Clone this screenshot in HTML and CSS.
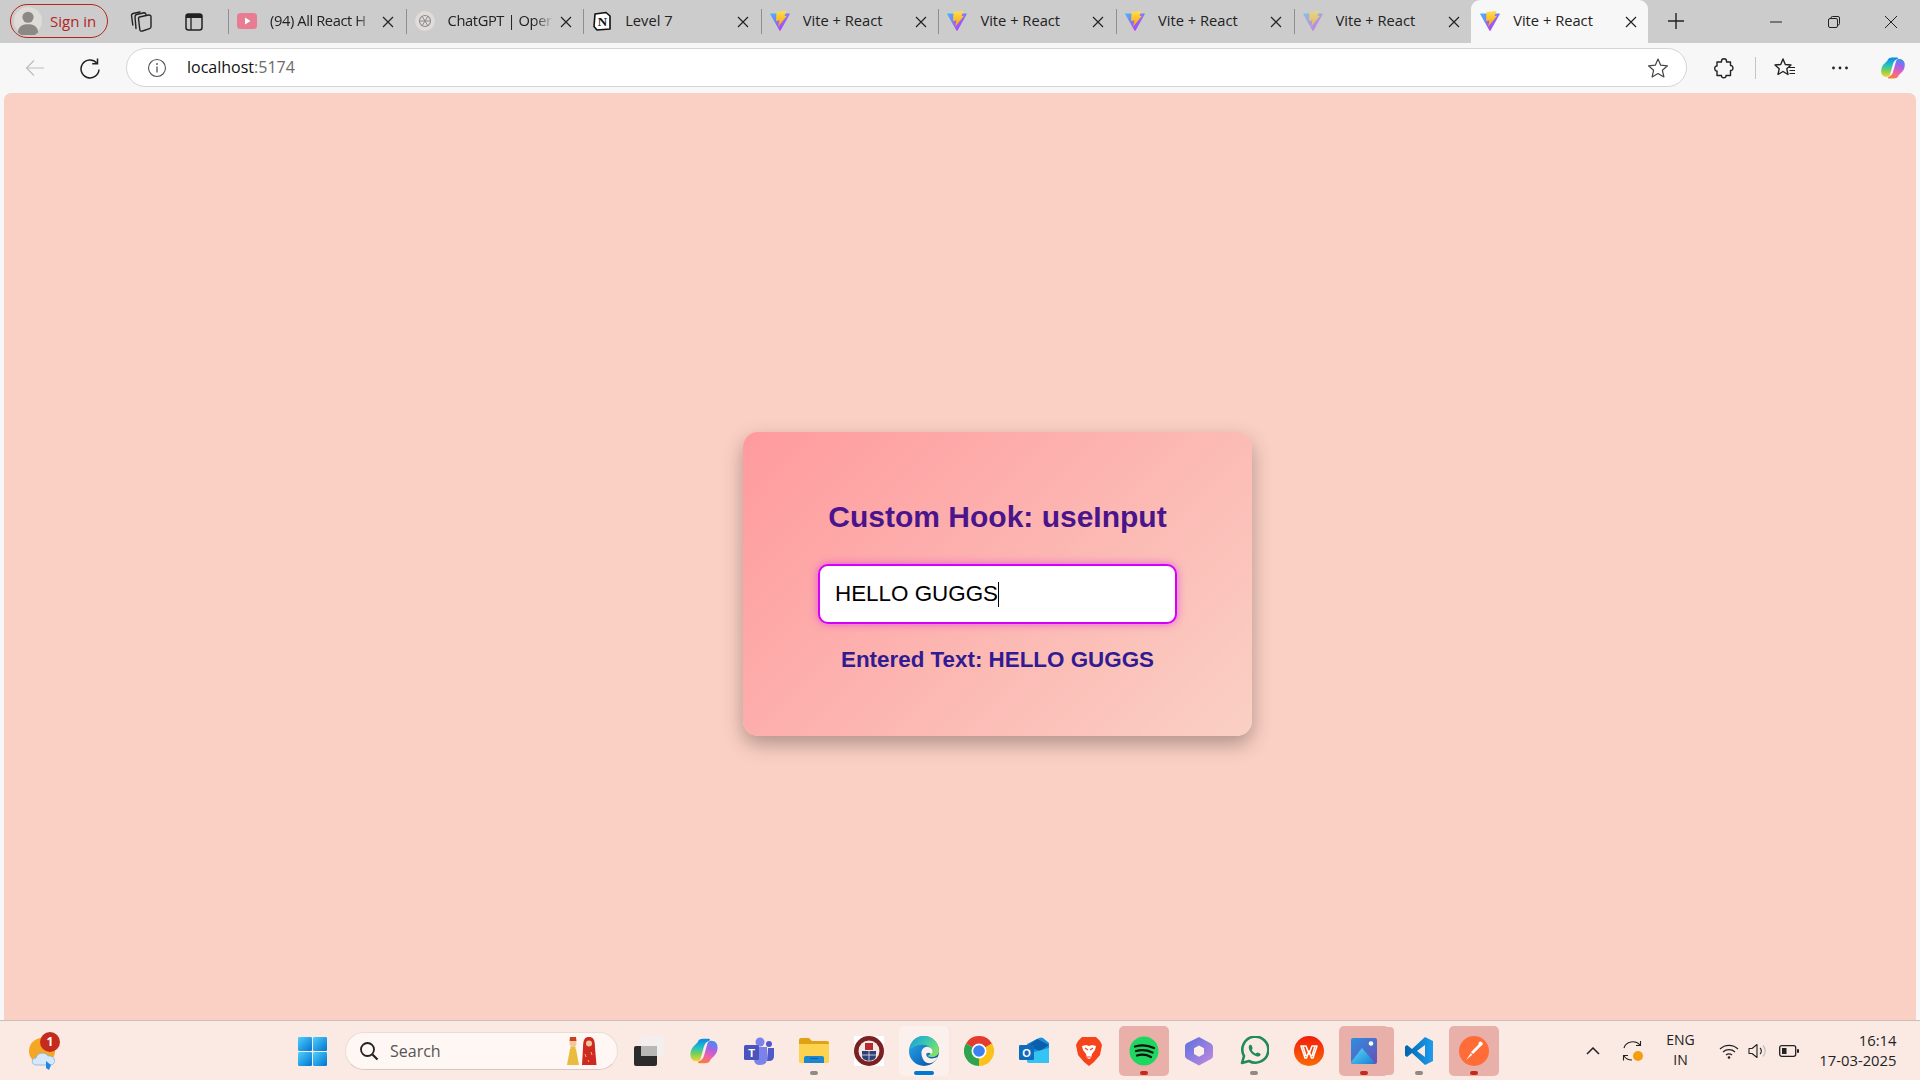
FILE: index.html
```html
<!DOCTYPE html>
<html lang="en">
<head>
<meta charset="utf-8">
<title>Vite + React</title>
<link rel="stylesheet" href="styles.css">
</head>
<body>
<svg class="defs" aria-hidden="true">
  <defs>
    <linearGradient id="viteBlue" x1="0" y1="0" x2=".75" y2="1"><stop offset="0" stop-color="#41b8ff"/><stop offset=".55" stop-color="#8a6cf5"/><stop offset="1" stop-color="#c034fe"/></linearGradient>
    <linearGradient id="viteBolt" x1="0" y1="0" x2="0" y2="1"><stop offset="0" stop-color="#ffdf50"/><stop offset="1" stop-color="#ff9f00"/></linearGradient>
    <linearGradient id="copi" x1=".3" y1="0" x2=".3" y2="1"><stop offset="0" stop-color="#0b86e8"/><stop offset=".4" stop-color="#22c3c4"/><stop offset=".68" stop-color="#7ed04d"/><stop offset="1" stop-color="#f6d33c"/></linearGradient>
    <linearGradient id="copi2" x1=".7" y1="0" x2=".4" y2="1"><stop offset="0" stop-color="#3f8ff0"/><stop offset=".35" stop-color="#a861e8"/><stop offset=".7" stop-color="#f060a8"/><stop offset="1" stop-color="#f5803c"/></linearGradient>
    <linearGradient id="startG" x1="0" y1="0" x2="1" y2="1"><stop offset="0" stop-color="#4fd0fb"/><stop offset="1" stop-color="#0073d1"/></linearGradient>
    <linearGradient id="edgeG" x1="0" y1="0" x2="1" y2="1"><stop offset="0" stop-color="#2bb0ea"/><stop offset=".6" stop-color="#1272c4"/><stop offset="1" stop-color="#0b4a94"/></linearGradient>
    <linearGradient id="edgeT" x1="0" y1="0" x2="1" y2=".6"><stop offset="0" stop-color="#1f9bdc"/><stop offset=".5" stop-color="#36c6b0"/><stop offset="1" stop-color="#7ee068"/></linearGradient>
    <linearGradient id="photoG" x1="0" y1="0" x2="1" y2="1"><stop offset="0" stop-color="#2d8fe0"/><stop offset="1" stop-color="#6a4fb5"/></linearGradient>
    <linearGradient id="photoM" x1="0" y1="0" x2="1" y2="1"><stop offset="0" stop-color="#5adcf5"/><stop offset="1" stop-color="#1a7fd6"/></linearGradient>
    <linearGradient id="m365" x1="0" y1="0" x2="1" y2="1"><stop offset="0" stop-color="#5a6fe0"/><stop offset="1" stop-color="#c58be0"/></linearGradient>
    <linearGradient id="wps" x1="0" y1="0" x2="0" y2="1"><stop offset="0" stop-color="#f21d0c"/><stop offset="1" stop-color="#fb6a05"/></linearGradient>
    <linearGradient id="vsc" x1="0" y1="0" x2="1" y2="0"><stop offset="0" stop-color="#0065a9"/><stop offset="1" stop-color="#1f9cf0"/></linearGradient>

    <symbol id="vite" viewBox="0 0 20 20">
      <path d="M.6 2.500 H19.400 Q20 2.500 19.700 3.200 L10.600 19.500 Q10 20.300 9.400 19.500 L.3 3.200 Q0 2.500 .6 2.500 Z" fill="url(#viteBlue)"/>
      <path d="M6.500 1 L16.500 0 L14.500 5 L17 4.800 L8 16 L9.500 9.500 L6 10 Z" fill="url(#viteBolt)"/>
    </symbol>
    <symbol id="close" viewBox="0 0 12 12">
      <path d="M1 1 L11 11 M11 1 L1 11" fill="none" stroke="#222" stroke-width="1.200"/>
    </symbol>
    <symbol id="copilot" viewBox="0 0 32 32">
      <path d="M9 7 C10 4 12 3 15 3 H21 C22.500 3 23 4.200 21.500 5 C18.500 6 17 8 16 11 L12.500 23.500 C11.500 27 10 27 8 27 C4 27 1.500 24 1.500 20 C1.500 16 3 13 5 11 Z" fill="url(#copi)"/>
      <path d="M23 25 C22 28 20 29 17 29 H11 C9.500 29 9 27.800 10.500 27 C13.500 26 15 24 16 21 L19.500 8.500 C20.500 5 22 5 24 5 C28 5 30.500 8 30.500 12 C30.500 16 29 19 27 21 Z" fill="url(#copi2)"/>
    </symbol>
  </defs>
</svg>

<header class="tabstrip">
  <div class="profile">
    <span class="pill">
      <svg class="avatar" viewBox="0 0 30 30"><circle cx="15" cy="15" r="15" fill="#dfdcd7"/><circle cx="15" cy="11" r="6" fill="#8b8985"/><path d="M4 27 C5 20 10 18.500 15 18.500 C20 18.500 25 20 26 27 A15 15 0 0 1 4 27 Z" fill="#8b8985"/></svg>
      <span class="pill-text">Sign in</span>
    </span>
    <span class="strip-btn">
      <svg viewBox="0 0 22 21" class="stack"><path d="M9.500 6 L18.500 4 Q21 3.800 21 6 V15.500 Q21 17.200 19.500 17.700 L12.500 20 Q10 20.500 9.800 18.500 L8.500 7.500 Q8.500 6.300 9.500 6 Z" fill="none" stroke="#222" stroke-width="1.400" stroke-linejoin="round"/><path d="M6 17.500 L5 6 Q5 4 6.500 3.500 L14 1.800 Q15.500 1.700 16 3.500" fill="none" stroke="#222" stroke-width="1.400" stroke-linecap="round"/><path d="M2.800 14 L1.500 4.500 Q1.400 3 3 2.500 L10 1" fill="none" stroke="#222" stroke-width="1.400" stroke-linecap="round"/></svg>
    </span>
    <span class="strip-btn">
      <svg viewBox="0 0 20 20" class="i20"><rect x="2" y="2" width="16" height="16" rx="2.500" fill="none" stroke="#222" stroke-width="1.500"/><path d="M2 3.500 Q2 2 4 2 H16 Q18 2 18 3.500 V6 H2 Z" fill="#222"/><path d="M7 6 V18" stroke="#222" stroke-width="1.300"/></svg>
    </span>
  </div>

  <div class="tab">
    <svg class="fav" viewBox="0 0 20 20"><rect x="0" y="2" width="20" height="16" rx="3.500" fill="#e87c92"/><path d="M8 6.500 L13.500 10 L8 13.500 Z" fill="#fff"/></svg>
    <span class="title fade">(94) All React H</span>
    <svg class="x"><use href="#close"/></svg>
  </div>
  <div class="tab">
    <svg class="fav" viewBox="0 0 20 20"><circle cx="10" cy="10" r="10" fill="#dfdcd9"/><circle cx="10" cy="10" r="5.500" fill="none" stroke="#8e8c8a" stroke-width="1.100"/><path d="M7 5 L13 15 M13 5 L7 15 M4.500 10 H15.500" stroke="#8e8c8a" stroke-width="1"/></svg>
    <span class="title fade">ChatGPT | Oper</span>
    <svg class="x"><use href="#close"/></svg>
  </div>
  <div class="tab">
    <svg class="fav" viewBox="0 0 20 20"><path d="M3 3 L14 1.500 L18 5 V18 L5 19 L2 15.500 Z" fill="#fff" stroke="#111" stroke-width="1.600" stroke-linejoin="round"/><text x="10.500" y="15" class="notion">N</text></svg>
    <span class="title">Level 7</span>
    <svg class="x"><use href="#close"/></svg>
  </div>
  <div class="tab">
    <svg class="fav"><use href="#vite"/></svg>
    <span class="title">Vite + React</span>
    <svg class="x"><use href="#close"/></svg>
  </div>
  <div class="tab">
    <svg class="fav"><use href="#vite"/></svg>
    <span class="title">Vite + React</span>
    <svg class="x"><use href="#close"/></svg>
  </div>
  <div class="tab">
    <svg class="fav"><use href="#vite"/></svg>
    <span class="title">Vite + React</span>
    <svg class="x"><use href="#close"/></svg>
  </div>
  <div class="tab">
    <svg class="fav faded"><use href="#vite"/></svg>
    <span class="title">Vite + React</span>
    <svg class="x"><use href="#close"/></svg>
  </div>
  <div class="tab tab-active">
    <svg class="fav"><use href="#vite"/></svg>
    <span class="title">Vite + React</span>
    <svg class="x"><use href="#close"/></svg>
  </div>
  <span class="newtab">
    <svg viewBox="0 0 18 18" class="i18"><path d="M9 1 V17 M1 9 H17" stroke="#222" stroke-width="1.400"/></svg>
  </span>
  <div class="winctl">
    <span class="win-btn"><svg viewBox="0 0 12 12" class="i12"><path d="M0 6 H12" stroke="#222" stroke-width="1"/></svg></span>
    <span class="win-btn"><svg viewBox="0 0 12 12" class="i12"><rect x=".5" y="2.500" width="9" height="9" rx="1.500" fill="none" stroke="#222"/><path d="M3 2.500 V2 Q3 .5 4.500 .5 H10 Q11.500 .5 11.500 2 V7.500 Q11.500 9 10 9" fill="none" stroke="#222"/></svg></span>
    <span class="win-btn"><svg viewBox="0 0 12 12" class="i12"><path d="M0 0 L12 12 M12 0 L0 12" stroke="#222" stroke-width="1"/></svg></span>
  </div>
</header>

<nav class="toolbar">
  <span class="tool">
    <svg viewBox="0 0 20 20" class="i20"><path d="M19 10 H1.500 M9 2.500 L1.500 10 L9 17.500" fill="none" stroke="#bdbdbd" stroke-width="1.200"/></svg>
  </span>
  <span class="tool tool-reload">
    <svg viewBox="0 0 22 22" class="i22"><path d="M17.800 6 A9 9 0 1 0 20 12.500" fill="none" stroke="#222" stroke-width="1.500"/><path d="M18.500 1.500 V6.800 H13.200" fill="none" stroke="#222" stroke-width="1.500"/></svg>
  </span>
  <div class="addr">
    <svg viewBox="0 0 20 20" class="i20 info"><circle cx="10" cy="10" r="8.500" fill="none" stroke="#555" stroke-width="1.100"/><path d="M10 8.500 V14.500" stroke="#555" stroke-width="1.300"/><circle cx="10" cy="6" r=".9" fill="#555"/></svg>
    <span class="url">localhost<span class="port">:5174</span></span>
    <svg viewBox="0 0 22 22" class="i22 star"><path d="M11 2 L13.700 8.200 L20.500 8.800 L15.400 13.300 L16.900 20 L11 16.500 L5.100 20 L6.600 13.300 L1.500 8.800 L8.300 8.200 Z" fill="none" stroke="#444" stroke-width="1.200" stroke-linejoin="round"/></svg>
  </div>
  <span class="tool tool-ext">
    <svg viewBox="0 0 22 22" class="i22"><path d="M8.500 4 C8.500 1 13.500 1 13.500 4 L13.500 5 L17.500 5 L17.500 8.500 C20.500 8 21 14 17.500 13.500 L17.500 18.500 L13 18.500 C13.500 21.500 8 21.500 8.500 18.500 L4 18.500 L4 14 C1 14.500 1 8.500 4 9 L4 5 L8.500 5 Z" fill="none" stroke="#222" stroke-width="1.400" stroke-linejoin="round"/></svg>
  </span>
  <span class="tool-sep"></span>
  <span class="tool tool-fav">
    <svg viewBox="0 0 24 22" class="i22w"><path d="M10 2 L12.300 7.500 L18 8 L13.800 11.800 L15 17.500 L10 14.500 L5 17.500 L6.200 11.800 L2 8 L7.700 7.500 Z" fill="none" stroke="#222" stroke-width="1.400" stroke-linejoin="round"/><path d="M16 10.500 H22 M16.500 13.500 H22 M16.500 16.500 H22" stroke="#222" stroke-width="1.200"/></svg>
  </span>
  <span class="tool tool-dots">
    <svg viewBox="0 0 18 4" class="dots"><circle cx="2.500" cy="2" r="1.400" fill="#222"/><circle cx="9" cy="2" r="1.400" fill="#222"/><circle cx="15.500" cy="2" r="1.400" fill="#222"/></svg>
  </span>
  <span class="tool tool-copilot">
    <svg class="i26"><use href="#copilot"/></svg>
  </span>
</nav>

<main class="page">
  <section class="card">
    <h2 class="card-title">Custom Hook: useInput</h2>
    <div class="field"><span class="field-text">HELLO GUGGS</span><span class="caret"></span></div>
    <p class="entered">Entered Text: HELLO GUGGS</p>
  </section>
</main>

<footer class="taskbar">
  <span class="weather">
    <svg viewBox="0 0 28 38" class="weather-svg"><circle cx="14" cy="19" r="13" fill="#f5a623"/><path d="M8 33 C3 33 3 26 8 26 C9 20 18 20 20 24 C27 23 29 32 23 33 Z" fill="#d7e8fa" stroke="#7fb4ea" stroke-width=".8"/><path d="M18 29 L23 33 L21 38 L18 36 Z" fill="#1e88e5"/></svg>
    <span class="badge">1</span>
  </span>
  <span class="start">
    <svg viewBox="0 0 29 29" class="start-svg"><rect x="0" y="0" width="14" height="14" rx="1.200" fill="url(#startG)"/><rect x="15" y="0" width="14" height="14" rx="1.200" fill="url(#startG)"/><rect x="0" y="15" width="14" height="14" rx="1.200" fill="url(#startG)"/><rect x="15" y="15" width="14" height="14" rx="1.200" fill="url(#startG)"/></svg>
  </span>
  <div class="search">
    <svg viewBox="0 0 20 20" class="i20"><circle cx="8.500" cy="8.500" r="6.500" fill="none" stroke="#222" stroke-width="1.800"/><path d="M13.500 13.500 L18.500 18.500" stroke="#222" stroke-width="2.200"/></svg>
    <span class="search-text">Search</span>
    <svg viewBox="0 0 32 30" class="dolls"><path d="M5 13 H11 L14 29 H2 Z" fill="#e9bb3f"/><circle cx="8" cy="7" r="3.500" fill="#f2c79e"/><path d="M4.500 5 H11.500 L11 1 H5 Z" fill="#c8401e"/><path d="M5.500 10.500 H10.500 V14 H5.500 Z" fill="#e9bb3f"/><path d="M18 12 C18 3 20 1 24 1 C28 1 30 3 30 12 L31.500 29 H17 Z" fill="#cf2a22"/><circle cx="24" cy="7.500" r="3" fill="#f2c79e"/><path d="M20 18 L21 21 M26 16 L27 19 M23 24 L24 26" stroke="#f2b84b" stroke-width="1"/></svg>
  </div>

  <div class="apps">
    <span class="app">
      <svg viewBox="0 0 30 30" class="icon"><rect x="0" y="10" width="23" height="20" rx="2" fill="#2b2b2b"/><rect x="7" y="0" width="23" height="20" rx="2" fill="#f2f0ef" fill-opacity=".9"/><rect x="7" y="10" width="16" height="10" fill="#b9b7b6"/></svg>
    </span>
    <span class="app">
      <svg class="icon"><use href="#copilot"/></svg>
    </span>
    <span class="app">
      <svg viewBox="0 0 30 30" class="icon"><circle cx="25" cy="8" r="3" fill="#5059c9"/><circle cx="16" cy="6" r="4.500" fill="#7b83eb"/><path d="M10 11 H23 V23 Q23 29 16 29 Q10 29 10 23 Z" fill="#7b83eb"/><path d="M24 12 H30 V20 Q30 25 25 25 L23 25 Z" fill="#5059c9"/><rect x="0" y="9" width="15" height="15" rx="1.500" fill="#4b53bc"/><text x="7.500" y="21" class="logo-letter">T</text></svg>
    </span>
    <span class="app has-dot">
      <svg viewBox="0 0 30 30" class="icon"><path d="M0 4 Q0 2 2 2 H10 L13 5 H28 Q30 5 30 7 V10 H0 Z" fill="#e0a214"/><path d="M0 8 H30 V26 Q30 27 29 27 H1 Q0 27 0 26 Z" fill="#fbd34e"/><path d="M5 27 V22 Q5 20 7 20 H23 Q25 20 25 22 V27 Z" fill="#1b87cf"/><path d="M11 22.500 H19" stroke="#0c5ea0" stroke-width="1"/></svg>
    </span>
    <span class="app">
      <svg viewBox="0 0 30 30" class="icon"><rect width="30" height="30" fill="#fff"/><circle cx="15" cy="15" r="15" fill="#7a1f22"/><circle cx="15" cy="15" r="10.500" fill="#f3e9e3"/><path d="M11 7 H19 V14 H11 Z" fill="#b8292f"/><path d="M8 15 H22 V20 Q22 24 15 25 Q8 24 8 20 Z" fill="#2b3f7a"/><path d="M15 15 V25 M8 19 H22" stroke="#f3e9e3" stroke-width=".8"/></svg>
    </span>
    <span class="app app-edge">
      <svg viewBox="0 0 30 30" class="icon"><circle cx="15" cy="15" r="15" fill="url(#edgeG)"/><path d="M1.500 9 C4 3 9 0 15 0 C24 0 30 7 30 15 C30 19 26 21.500 22 21 C20 21 18.500 20 18.500 20 C23 18 23 12 19 10 C13 7 5 10 1.500 13 Z" fill="url(#edgeT)"/><path d="M12.500 18 C12 13 16 9.800 20 11.200 C23.500 12.500 24.500 15.500 22.500 18 C20 15.800 16.800 16.500 17.300 19 C18 22.500 24 24 29 20.500 C27.500 24.500 24 27 20.500 27.300 C16 27.500 13 23 12.500 18 Z" fill="#fcf0ec"/></svg>
    </span>
    <span class="app">
      <svg viewBox="0 0 30 30" class="icon"><path d="M15 15 L2 7.500 A15 15 0 0 1 28 7.500 Z" fill="#e33b2e"/><path d="M15 15 L28 7.500 A15 15 0 0 1 15 30 Z" fill="#fbc116"/><path d="M15 15 L15 30 A15 15 0 0 1 2 7.500 Z" fill="#2ea44f"/><circle cx="15" cy="15" r="7.500" fill="#fff"/><circle cx="15" cy="15" r="5.800" fill="#3b82f0"/></svg>
    </span>
    <span class="app">
      <svg viewBox="0 0 30 30" class="icon"><path d="M8 8 L20 2 Q22 1 24 2 L30 7 V26 Q30 27 28 27 H12 Q8 27 8 24 Z" fill="#1490df"/><path d="M18 3 L30 9 L21 15 L8 10 Z" fill="#0b5fa8"/><path d="M8 18 L30 12 V26 Q30 27 28 27 H10 Q8 27 8 25 Z" fill="#34c4f3"/><rect x="0" y="9" width="15" height="15" rx="1.200" fill="#0f6cbd"/><text x="7.500" y="21" class="logo-letter">O</text></svg>
    </span>
    <span class="app">
      <svg viewBox="0 0 30 30" class="icon"><path d="M8 1 H22 L26 5 L28 9 L26 19 L20 26 L15 30 L10 26 L4 19 L2 9 L4 5 Z" fill="#f5431c"/><path d="M8 10 L12 9 L15 10 L18 9 L22 10 L21 14 L18 18 L17 22 L15 23 L13 22 L12 18 L9 14 Z" fill="#fff"/><path d="M11 12 L14 14 M19 12 L16 14 M13 21 H17" stroke="#f5431c" stroke-width="1.200"/></svg>
    </span>
    <span class="app app-run">
      <svg viewBox="0 0 30 30" class="icon"><circle cx="15" cy="15" r="14.500" fill="#1ed760"/><path d="M6 10.500 C13 8.500 19 9 25 12 M7 15 C13 13.500 18 14 23.500 16.500 M8 19.500 C13 18 17.500 18.500 22 21" fill="none" stroke="#111" stroke-width="2.300" stroke-linecap="round"/></svg>
    </span>
    <span class="app">
      <svg viewBox="0 0 30 30" class="icon"><path d="M15 1 L27 7.500 Q29 9 29 11 V20 Q29 22 27 23 L15 29.500 L3 23 Q1 22 1 20 V10 Q1 8 3 7 Z" fill="url(#m365)"/><path d="M15 9.500 L20 12.300 V18 L15 20.800 L10 18 V12.300 Z" fill="#fcefea"/></svg>
    </span>
    <span class="app has-dot">
      <svg viewBox="0 0 30 30" class="icon"><path d="M3 27 L5 20 A13 13 0 1 1 10 25 Z" fill="none" stroke="#1f8a5b" stroke-width="2.600" stroke-linejoin="round"/><path d="M10.500 9 Q9 11 10.500 14.500 Q13 19 18 20.500 Q20.500 21 21.500 19 Q22 18 21 17.500 L18.800 16.500 Q18 16.300 17.500 17 Q17 17.800 16 17.300 Q13.500 16 12.700 13.800 Q13.500 13 13.700 12.300 L12.700 9.500 Q12 8.300 10.500 9 Z" fill="#1f8a5b"/></svg>
    </span>
    <span class="app">
      <svg viewBox="0 0 30 30" class="icon"><circle cx="15" cy="15" r="15" fill="url(#wps)"/><path d="M7 10 H12 L15 18 L18 10 H23 L19 22 H17.500 L15 15 L12.500 22 H11 Z M9 10 L12 20 M21 10 L18 20" fill="none" stroke="#fff" stroke-width="1.500" stroke-linejoin="round"/></svg>
    </span>
    <span class="app app-run app-stacked">
      <svg viewBox="0 0 26 26" class="icon icon-photo"><rect width="26" height="26" rx="2" fill="url(#photoG)"/><circle cx="20" cy="5.500" r="2.300" fill="#fff"/><path d="M0 24 L11 10 L23 24 Q23 26 21 26 H2 Q0 26 0 24 Z" fill="url(#photoM)"/></svg>
    </span>
    <span class="app has-dot">
      <svg viewBox="0 0 30 30" class="icon"><path d="M21 1 L29 5 V25 L21 29 L8 17 L3 21 L1 19.500 V10.500 L3 9 L8 13 Z M21 9 L13 15 L21 21 Z" fill="url(#vsc)" fill-rule="evenodd"/></svg>
    </span>
    <span class="app app-run">
      <svg viewBox="0 0 30 30" class="icon"><circle cx="15" cy="15" r="15" fill="#ff6c37"/><path d="M22 6 L24 8 L14 18 L12 16 Z M12 17 L13 19 L7 24 Z" fill="#fff"/><circle cx="21.500" cy="7.500" r="2" fill="#fff"/></svg>
    </span>
  </div>

  <div class="tray">
    <svg viewBox="0 0 14 8" class="chev"><path d="M1 7 L7 1 L13 7" fill="none" stroke="#222" stroke-width="1.500"/></svg>
    <span class="sync">
      <svg viewBox="0 0 22 22" class="i22"><path d="M2 8 A9 8 0 0 1 18 5" fill="none" stroke="#222" stroke-width="1.100"/><path d="M18.500 1 V5.500 H14" fill="none" stroke="#222" stroke-width="1.100"/><path d="M2 16 A9 8 0 0 0 10 20" fill="none" stroke="#222" stroke-width="1.100"/><path d="M1.500 20.500 V15.500 H6" fill="none" stroke="#222" stroke-width="1.100"/><circle cx="16" cy="16" r="5" fill="#f59e0b"/></svg>
    </span>
    <span class="lang"><span>ENG</span><span>IN</span></span>
    <svg viewBox="0 0 20 16" class="wifi"><path d="M1 6 A13 13 0 0 1 19 6 M4 9 A9 9 0 0 1 16 9 M7 12 A5 5 0 0 1 13 12" fill="none" stroke="#222" stroke-width="1.200"/><circle cx="10" cy="14.500" r="1.300" fill="#222"/></svg>
    <svg viewBox="0 0 20 16" class="vol"><path d="M1 5.500 H4 L9 1.500 V14.500 L4 10.500 H1 Z" fill="none" stroke="#222" stroke-width="1.100" stroke-linejoin="round"/><path d="M12 5 A4 4 0 0 1 12 11" fill="none" stroke="#222" stroke-width="1.100"/><path d="M15 2.500 A8 8 0 0 1 15 13.500" fill="none" stroke="#bbb" stroke-width="1.100"/></svg>
    <svg viewBox="0 0 20 12" class="batt"><rect x=".7" y=".7" width="16" height="10.600" rx="2" fill="none" stroke="#222" stroke-width="1.300"/><rect x="3" y="3" width="4.500" height="6" fill="#222"/><rect x="18" y="4" width="2" height="4" rx="1" fill="#222"/></svg>
    <span class="clock"><span>16:14</span><span>17-03-2025</span></span>
  </div>
</footer>
</body>
</html>
```

FILE: styles.css
```css
* { box-sizing: border-box; }
html, body { margin: 0; height: 100%; }
body {
  display: flex;
  flex-direction: column;
  height: 100vh;
  overflow: hidden;
  background: #f7f7f7;
  font-family: "Open Sans", "Noto Sans", sans-serif;
  color: #222;
}
.defs { position: absolute; width: 0; height: 0; }
svg { display: block; flex: none; }
.i12 { width: 12px; height: 12px; }
.i18 { width: 18px; height: 18px; }
.i20 { width: 20px; height: 20px; }
.i22 { width: 22px; height: 22px; }
.i22w { width: 24px; height: 22px; }
.i26 { width: 26px; height: 26px; }
.stack { width: 22px; height: 21px; }
.notion { font: 700 13px "Liberation Serif", serif; fill: #111; text-anchor: middle; }
.logo-letter { font: 700 11px "Liberation Sans", sans-serif; fill: #fff; text-anchor: middle; }

/* Tab strip */
.tabstrip {
  display: flex;
  align-items: stretch;
  height: 43px;
  flex: none;
  background: #cccccc;
}
.profile {
  display: flex;
  align-items: center;
  width: 228px;
  flex: none;
  padding-left: 10px;
}
.pill {
  display: flex;
  align-items: center;
  gap: 8px;
  width: 98px;
  height: 34px;
  padding-left: 3px;
  border: 1.5px solid #b3261e;
  border-radius: 17px;
  margin-bottom: 1px;
}
.avatar { width: 28px; height: 28px; }
.pill-text { font-size: 15px; color: #b3261e; }
.strip-btn {
  display: flex;
  justify-content: center;
  width: 53px;
}
.strip-btn:nth-child(2) { margin-left: 6px; }

.tab {
  display: flex;
  align-items: center;
  width: 177.6px;
  flex: none;
  padding: 0 0 0 9px;
  position: relative;
}
.tab::before {
  content: "";
  position: absolute;
  left: 0;
  top: 9px;
  width: 1px;
  height: 25px;
  background: #8f8f8f;
}
.tab-active {
  background: #f7f7f7;
  border-radius: 9px 9px 0 0;
  width: 177px;
}
.tab-active::before { display: none; }
.fav { width: 20px; height: 20px; margin-bottom: 1px; }
.faded { opacity: .5; }
.title {
  margin-left: 13px;
  width: 108px;
  white-space: nowrap;
  overflow: hidden;
  font-size: 14.7px;
  line-height: 20px;
  margin-bottom: 3px;
  color: #222;
}
.fade {
  letter-spacing: -.4px;
  -webkit-mask-image: linear-gradient(to right, #000 80%, transparent 98%);
  mask-image: linear-gradient(to right, #000 80%, transparent 98%);
}
.x { width: 12px; height: 12px; margin-left: 4px; }
.newtab {
  display: flex;
  align-items: center;
  justify-content: center;
  width: 56px;
  margin-bottom: 1px;
}
.winctl {
  display: flex;
  margin-left: auto;
  align-items: center;
}
.win-btn { display: flex; justify-content: center; width: 57.500px; }

/* Toolbar */
.toolbar {
  display: flex;
  align-items: center;
  height: 50px;
  flex: none;
  padding: 0 5px 1px 13px;
  background: #f7f7f7;
}
.tool {
  display: flex;
  align-items: center;
  justify-content: center;
  width: 44px;
  height: 32px;
}
.tool-reload { margin-left: 11px; }
.addr {
  display: flex;
  align-items: center;
  width: 1561px;
  height: 39px;
  margin-left: 14px;
  padding: 0 17px 0 20px;
  background: #fff;
  border: 1px solid #d4d4d4;
  border-radius: 20px;
}
.url { margin-left: 20px; font-size: 16px; color: #111; margin-bottom: 1px; }
.port { color: #6b6b6b; }
.star { margin-left: auto; }
.tool-ext { margin-left: 15px; }
.tool-sep { width: 1px; height: 22px; background: #c5c5c5; margin-left: 9px; flex: none; }
.tool-fav { margin-left: 7px; }
.tool-dots { margin-left: 11px; }
.tool-copilot { margin-left: 9px; }
.dots { width: 18px; height: 4px; }

/* Page */
.page {
  flex: 1;
  display: flex;
  align-items: center;
  justify-content: center;
  margin: 0 4px;
  padding: 55px 0 0 75px;
  background: #fbd0c4;
  border-radius: 7px 7px 0 0;
}
.card {
  display: flex;
  flex-direction: column;
  align-items: center;
  width: 509px;
  height: 304px;
  padding-top: 66px;
  border-radius: 15px;
  background: linear-gradient(135deg, #ff9a9e 0%, #fad0c4 100%);
  box-shadow: 0 8px 20px rgba(0, 0, 0, .3);
  font-family: "Liberation Sans", Arial, sans-serif;
}
.card-title {
  margin: 0;
  font-size: 30px;
  line-height: 37px;
  font-weight: 700;
  color: #4a148c;
}
.field {
  display: flex;
  align-items: center;
  width: 359px;
  height: 60px;
  margin-top: 29px;
  padding: 0 15px;
  background: #fff;
  border: 2px solid #d500f9;
  border-radius: 10px;
  box-shadow: 0 0 8px rgba(213, 0, 249, .5);
}
.field-text { font-size: 22.400px; color: #000; margin-bottom: 1px; }
.caret { width: 1px; height: 25px; background: #000; }
.entered {
  margin: 22px 0 0;
  font-size: 22.400px;
  line-height: 28px;
  font-weight: 700;
  color: #311b92;
}

/* Taskbar */
.taskbar {
  display: flex;
  align-items: center;
  height: 60px;
  flex: none;
  background: #fbeae4;
  border-top: 1px solid #cdbeb8;
  padding-left: 28px;
}
.weather { position: relative; width: 28px; height: 38px; }
.weather-svg { width: 28px; height: 38px; }
.badge {
  position: absolute;
  left: 12px;
  top: 0;
  width: 20px;
  height: 20px;
  border-radius: 50%;
  background: #c42b1c;
  color: #fff;
  font-size: 12px;
  font-weight: 700;
  line-height: 20px;
  text-align: center;
}
.start { margin-left: 242px; margin-top: 1px; }
.start-svg { width: 29px; height: 29px; }
.search {
  display: flex;
  align-items: center;
  width: 273px;
  height: 38px;
  margin-left: 18px;
  padding: 0 20px 0 13px;
  background: #fff7f4;
  border: 1px solid #eadcd6;
  border-bottom-color: #d9c8c2;
  border-radius: 19px;
}
.search-text { margin-left: 11px; font-size: 16px; color: #555; }
.dolls { width: 32px; height: 30px; margin-left: auto; }
.apps { display: flex; margin-left: 3.500px; }
.app {
  position: relative;
  display: flex;
  align-items: center;
  justify-content: center;
  width: 50px;
  height: 50px;
  margin: 0 2.500px;
  border-radius: 5px;
}
.icon { width: 30px; height: 30px; }
.icon-photo { width: 26px; height: 26px; }
.has-dot::after, .app-run::after, .app-edge::after {
  content: "";
  position: absolute;
  left: 21px;
  bottom: 1px;
  width: 8px;
  height: 4px;
  border-radius: 2px;
  background: #8f8a88;
}
.app-run { background: #e9b0aa; }
.app-run::after { background: #c42b1c; }
.app-edge {
  background: #fcf0ec;
  box-shadow: 3px 0 0 -1px #fbe6df;
}
.app-edge::after { left: 15px; width: 20px; background: #0078d4; }
.app-stacked { box-shadow: 6px 0 0 -1px #e9b0aa, 4px 0 0 -1px #fbeae4; }
.tray {
  display: flex;
  align-items: center;
  margin-left: 84px;
  font-size: 14px;
  line-height: 20px;
  color: #222;
}
.chev { width: 14px; height: 8px; }
.sync { margin-left: 22px; }
.lang {
  display: flex;
  flex-direction: column;
  align-items: center;
  width: 38px;
  margin-left: 18px;
  margin-bottom: 2px;
}
.wifi { width: 20px; height: 16px; margin-left: 19px; }
.vol { width: 20px; height: 16px; margin-left: 9px; }
.batt { width: 20px; height: 12px; margin-left: 11px; }
.clock {
  display: flex;
  flex-direction: column;
  align-items: flex-end;
  margin-left: 20px;
  width: 78px;
  margin-bottom: 2px;
  font-size: 14.800px;
}
```
